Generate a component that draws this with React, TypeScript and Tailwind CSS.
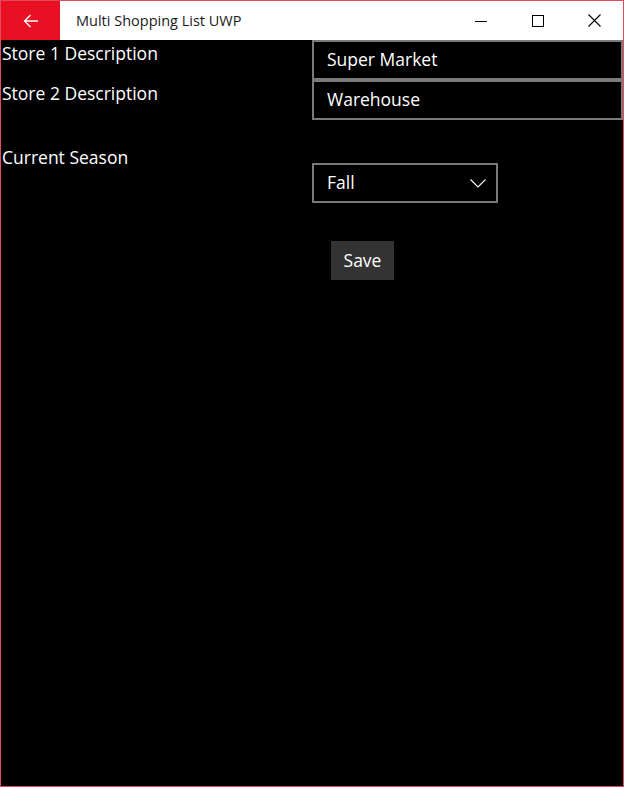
const font = { fontFamily: '"Segoe UI", "Open Sans", "Noto Sans", sans-serif' }

function TitleBar() {
  return (
    <div className="flex h-[39px] items-stretch bg-white">
      {/* back button */}
      <div className="flex w-[59px] items-center justify-center bg-[#e81123]">
        <svg width="16" height="14" viewBox="0 0 16 14" fill="none" stroke="white" strokeWidth="1.3">
          <path d="M15 7H1.5M7.5 1L1.5 7l6 6" />
        </svg>
      </div>
      <div className="flex flex-1 items-center pl-[16px] text-[14.5px] text-[#1a1a1a]">Multi Shopping List UWP</div>
      {/* window controls */}
      <div className="flex items-stretch">
        <div className="flex w-[57px] items-center justify-center">
          <svg width="12" height="12" viewBox="0 0 12 12" stroke="black" strokeWidth="1">
            <path d="M0 6.5h12" />
          </svg>
        </div>
        <div className="flex w-[57px] items-center justify-center">
          <svg width="12" height="12" viewBox="0 0 12 12" fill="none" stroke="black" strokeWidth="1">
            <rect x="0.5" y="0.5" width="11" height="11" />
          </svg>
        </div>
        <div className="flex w-[57px] items-center justify-center pr-[1px]">
          <svg width="13" height="13" viewBox="0 0 13 13" stroke="black" strokeWidth="1.1">
            <path d="M0.5 0.5l12 12M12.5 0.5l-12 12" />
          </svg>
        </div>
      </div>
    </div>
  )
}

export default function App() {
  return (
    <div
      style={font}
      className="flex h-[787px] w-[624px] flex-col overflow-hidden border border-[#e5495b] bg-black text-white"
    >
      <TitleBar />

      <div className="flex flex-col">
        {/* Store rows */}
        <div className="flex h-[40px]">
          <div className="w-[311px] pl-[1px] pt-[1px] text-[17.5px] leading-[24px]">Store 1 Description</div>
          <div className="flex flex-1 items-center border-2 border-[#7a7a7a] pb-[2px] pl-[13px] text-[17.5px]">Super Market</div>
        </div>
        <div className="flex h-[40px]">
          <div className="w-[311px] pl-[1px] pt-[1px] text-[17.5px] leading-[24px]">Store 2 Description</div>
          <div className="flex flex-1 items-center border-2 border-[#7a7a7a] pb-[2px] pl-[13px] text-[17.5px]">Warehouse</div>
        </div>

        {/* Season */}
        <div className="flex pt-[25px]">
          <div className="w-[311px] pl-[1px] text-[17.5px] leading-[24px]">Current Season</div>
          <div className="pt-[18px]">
            <div className="flex h-[40px] w-[186px] items-center justify-between border-2 border-[#7a7a7a] pb-[2px] pl-[13px] pr-[10px] text-[17.5px]">
              <span>Fall</span>
              <svg width="16" height="9" viewBox="0 0 16 9" fill="none" stroke="white" strokeWidth="1.1" className="mt-[2px]">
                <path d="M0.5 0.5L8 8l7.5-7.5" />
              </svg>
            </div>
          </div>
        </div>

        {/* Save */}
        <div className="flex pl-[330px] pt-[38px]">
          <button className="flex h-[39px] w-[63px] items-center justify-center bg-[#333333] text-[17.5px] text-white">
            Save
          </button>
        </div>
      </div>
    </div>
  )
}
